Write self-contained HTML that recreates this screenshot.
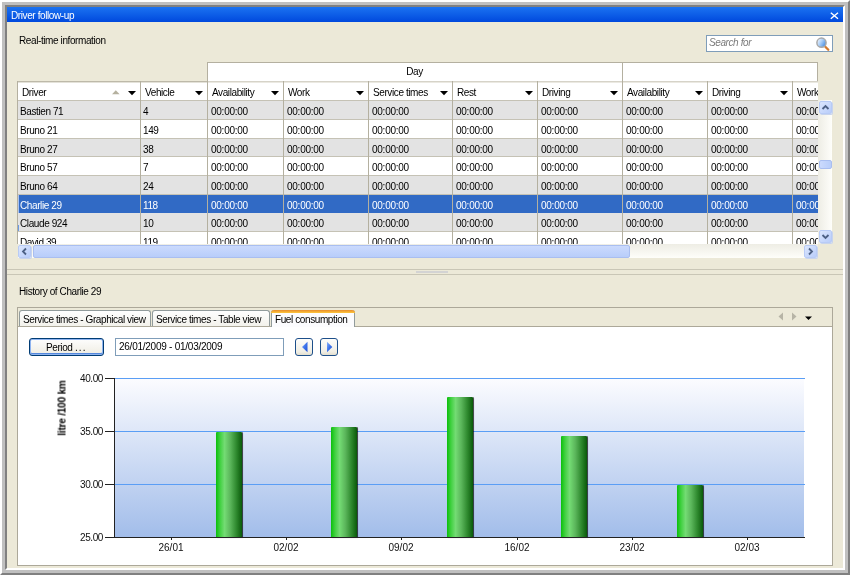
<!DOCTYPE html><html><head><meta charset="utf-8"><style>
*{box-sizing:border-box}
html,body{margin:0;padding:0}
body{width:850px;height:575px;overflow:hidden;position:relative;background:#fff;font-family:"Liberation Sans", sans-serif;font-size:10px;}
.a{position:absolute}
.t{position:absolute;white-space:nowrap;line-height:11px;font-size:10px;letter-spacing:-0.4px;will-change:transform}
</style></head><body>
<div class="a" style="left:0;top:0;width:850px;height:575px;background:#c0c0c0;border:2px solid;border-color:#fff #808080 #808080 #fff"></div>
<div class="a" style="left:5px;top:5px;width:840px;height:565px;background:#ece9d8;border:2px solid;border-color:#808080 #fff #fff #808080"></div>
<div class="a" style="left:7px;top:7px;width:836px;height:15px;background:linear-gradient(#1b72f1,#0c5ce6 55%,#0048dd)"></div>
<div class="t" style="left:11px;top:10px;color:#fff;">Driver follow-up</div>
<svg class="a" style="left:829px;top:11px" width="11" height="10"><path d="M1.8 1.8 L9 7.8 M9 1.8 L1.8 7.8" stroke="#fff" stroke-width="1.4"/></svg>
<div class="t" style="left:19px;top:35px;color:#000;">Real-time information</div>
<div class="a" style="left:706px;top:35px;width:127px;height:17px;background:#fff;border:1px solid #7f9db9"></div>
<div class="t" style="left:709px;top:37px;color:#7a7a7a;font-style:italic;">Search for</div>
<svg class="a" style="left:814px;top:35px" width="17" height="17">
<defs><linearGradient id="mg" x1="0" y1="0.2" x2="1" y2="0.8"><stop offset="0" stop-color="#f4f9ff"/><stop offset="0.45" stop-color="#a9cdf6"/><stop offset="1" stop-color="#3d86e0"/></linearGradient></defs>
<line x1="11.3" y1="11.8" x2="14.3" y2="14.8" stroke="#d5792c" stroke-width="2.3" stroke-linecap="round"/>
<circle cx="7.5" cy="7.7" r="4.6" fill="url(#mg)" stroke="#a8a8a8" stroke-width="1.5"/>
</svg>
<div class="a" style="left:17px;top:62px;width:801px;height:182px;overflow:hidden">
<div class="a" style="left:190px;top:0px;width:611px;height:20px;background:#fff;border-top:1px solid #b4b0a0;"></div>
<div class="a" style="left:190px;top:0px;width:1px;height:20px;background:#b4b0a0"></div>
<div class="a" style="left:605px;top:0px;width:1px;height:20px;background:#b4b0a0"></div>
<div class="a" style="left:800px;top:0px;width:1px;height:20px;background:#b4b0a0"></div>
<div class="t" style="left:190px;width:415px;text-align:center;top:4px">Day</div>
<div class="a" style="left:0px;top:19px;width:801px;height:19px;background:#fff"></div>
<div class="a" style="left:190px;top:19px;width:611px;height:1px;background:#d6d3c8"></div>
<div class="a" style="left:190px;top:20px;width:611px;height:1px;background:#ebe9e2"></div>
<div class="a" style="left:0px;top:19px;width:190px;height:1px;background:#bdb9a9"></div>
<div class="a" style="left:0px;top:20px;width:190px;height:1px;background:#e4e2d9"></div>
<div class="a" style="left:0px;top:38px;width:801px;height:1px;background:#c5c2b5"></div>
<div class="a" style="left:0px;top:39px;width:801px;height:18px;background:#e3e3e3"></div>
<div class="a" style="left:0px;top:57px;width:801px;height:1px;background:#c5c2b5"></div>
<div class="t" style="left:3px;top:43.5px;color:#000;">Bastien 71</div>
<div class="t" style="left:126px;top:43.5px;color:#000;">4</div>
<div class="t" style="left:194px;top:43.5px;color:#000;letter-spacing:-0.25px;">00:00:00</div>
<div class="t" style="left:270px;top:43.5px;color:#000;letter-spacing:-0.25px;">00:00:00</div>
<div class="t" style="left:355px;top:43.5px;color:#000;letter-spacing:-0.25px;">00:00:00</div>
<div class="t" style="left:439px;top:43.5px;color:#000;letter-spacing:-0.25px;">00:00:00</div>
<div class="t" style="left:524px;top:43.5px;color:#000;letter-spacing:-0.25px;">00:00:00</div>
<div class="t" style="left:609px;top:43.5px;color:#000;letter-spacing:-0.25px;">00:00:00</div>
<div class="t" style="left:694px;top:43.5px;color:#000;letter-spacing:-0.25px;">00:00:00</div>
<div class="t" style="left:779px;top:43.5px;color:#000;letter-spacing:-0.25px;">00:00:00</div>
<div class="a" style="left:0px;top:58px;width:801px;height:18px;background:#fff"></div>
<div class="a" style="left:0px;top:76px;width:801px;height:1px;background:#c5c2b5"></div>
<div class="t" style="left:3px;top:62.5px;color:#000;">Bruno 21</div>
<div class="t" style="left:126px;top:62.5px;color:#000;">149</div>
<div class="t" style="left:194px;top:62.5px;color:#000;letter-spacing:-0.25px;">00:00:00</div>
<div class="t" style="left:270px;top:62.5px;color:#000;letter-spacing:-0.25px;">00:00:00</div>
<div class="t" style="left:355px;top:62.5px;color:#000;letter-spacing:-0.25px;">00:00:00</div>
<div class="t" style="left:439px;top:62.5px;color:#000;letter-spacing:-0.25px;">00:00:00</div>
<div class="t" style="left:524px;top:62.5px;color:#000;letter-spacing:-0.25px;">00:00:00</div>
<div class="t" style="left:609px;top:62.5px;color:#000;letter-spacing:-0.25px;">00:00:00</div>
<div class="t" style="left:694px;top:62.5px;color:#000;letter-spacing:-0.25px;">00:00:00</div>
<div class="t" style="left:779px;top:62.5px;color:#000;letter-spacing:-0.25px;">00:00:00</div>
<div class="a" style="left:0px;top:77px;width:801px;height:17px;background:#e3e3e3"></div>
<div class="a" style="left:0px;top:94px;width:801px;height:1px;background:#c5c2b5"></div>
<div class="t" style="left:3px;top:81.5px;color:#000;">Bruno 27</div>
<div class="t" style="left:126px;top:81.5px;color:#000;">38</div>
<div class="t" style="left:194px;top:81.5px;color:#000;letter-spacing:-0.25px;">00:00:00</div>
<div class="t" style="left:270px;top:81.5px;color:#000;letter-spacing:-0.25px;">00:00:00</div>
<div class="t" style="left:355px;top:81.5px;color:#000;letter-spacing:-0.25px;">00:00:00</div>
<div class="t" style="left:439px;top:81.5px;color:#000;letter-spacing:-0.25px;">00:00:00</div>
<div class="t" style="left:524px;top:81.5px;color:#000;letter-spacing:-0.25px;">00:00:00</div>
<div class="t" style="left:609px;top:81.5px;color:#000;letter-spacing:-0.25px;">00:00:00</div>
<div class="t" style="left:694px;top:81.5px;color:#000;letter-spacing:-0.25px;">00:00:00</div>
<div class="t" style="left:779px;top:81.5px;color:#000;letter-spacing:-0.25px;">00:00:00</div>
<div class="a" style="left:0px;top:95px;width:801px;height:18px;background:#fff"></div>
<div class="a" style="left:0px;top:113px;width:801px;height:1px;background:#c5c2b5"></div>
<div class="t" style="left:3px;top:99.5px;color:#000;">Bruno 57</div>
<div class="t" style="left:126px;top:99.5px;color:#000;">7</div>
<div class="t" style="left:194px;top:99.5px;color:#000;letter-spacing:-0.25px;">00:00:00</div>
<div class="t" style="left:270px;top:99.5px;color:#000;letter-spacing:-0.25px;">00:00:00</div>
<div class="t" style="left:355px;top:99.5px;color:#000;letter-spacing:-0.25px;">00:00:00</div>
<div class="t" style="left:439px;top:99.5px;color:#000;letter-spacing:-0.25px;">00:00:00</div>
<div class="t" style="left:524px;top:99.5px;color:#000;letter-spacing:-0.25px;">00:00:00</div>
<div class="t" style="left:609px;top:99.5px;color:#000;letter-spacing:-0.25px;">00:00:00</div>
<div class="t" style="left:694px;top:99.5px;color:#000;letter-spacing:-0.25px;">00:00:00</div>
<div class="t" style="left:779px;top:99.5px;color:#000;letter-spacing:-0.25px;">00:00:00</div>
<div class="a" style="left:0px;top:114px;width:801px;height:18px;background:#e3e3e3"></div>
<div class="a" style="left:0px;top:132px;width:801px;height:1px;background:#c5c2b5"></div>
<div class="t" style="left:3px;top:118.5px;color:#000;">Bruno 64</div>
<div class="t" style="left:126px;top:118.5px;color:#000;">24</div>
<div class="t" style="left:194px;top:118.5px;color:#000;letter-spacing:-0.25px;">00:00:00</div>
<div class="t" style="left:270px;top:118.5px;color:#000;letter-spacing:-0.25px;">00:00:00</div>
<div class="t" style="left:355px;top:118.5px;color:#000;letter-spacing:-0.25px;">00:00:00</div>
<div class="t" style="left:439px;top:118.5px;color:#000;letter-spacing:-0.25px;">00:00:00</div>
<div class="t" style="left:524px;top:118.5px;color:#000;letter-spacing:-0.25px;">00:00:00</div>
<div class="t" style="left:609px;top:118.5px;color:#000;letter-spacing:-0.25px;">00:00:00</div>
<div class="t" style="left:694px;top:118.5px;color:#000;letter-spacing:-0.25px;">00:00:00</div>
<div class="t" style="left:779px;top:118.5px;color:#000;letter-spacing:-0.25px;">00:00:00</div>
<div class="a" style="left:0px;top:133px;width:801px;height:18px;background:#316ac5"></div>
<div class="a" style="left:1px;top:133px;width:1px;height:18px;background:#a9c1ee"></div>
<div class="t" style="left:3px;top:137.5px;color:#fff;">Charlie 29</div>
<div class="t" style="left:126px;top:137.5px;color:#fff;">118</div>
<div class="t" style="left:194px;top:137.5px;color:#fff;letter-spacing:-0.25px;">00:00:00</div>
<div class="t" style="left:270px;top:137.5px;color:#fff;letter-spacing:-0.25px;">00:00:00</div>
<div class="t" style="left:355px;top:137.5px;color:#fff;letter-spacing:-0.25px;">00:00:00</div>
<div class="t" style="left:439px;top:137.5px;color:#fff;letter-spacing:-0.25px;">00:00:00</div>
<div class="t" style="left:524px;top:137.5px;color:#fff;letter-spacing:-0.25px;">00:00:00</div>
<div class="t" style="left:609px;top:137.5px;color:#fff;letter-spacing:-0.25px;">00:00:00</div>
<div class="t" style="left:694px;top:137.5px;color:#fff;letter-spacing:-0.25px;">00:00:00</div>
<div class="t" style="left:779px;top:137.5px;color:#fff;letter-spacing:-0.25px;">00:00:00</div>
<div class="a" style="left:0px;top:151px;width:801px;height:18px;background:#e3e3e3"></div>
<div class="a" style="left:0px;top:169px;width:801px;height:1px;background:#c5c2b5"></div>
<div class="t" style="left:3px;top:155.5px;color:#000;">Claude 924</div>
<div class="t" style="left:126px;top:155.5px;color:#000;">10</div>
<div class="t" style="left:194px;top:155.5px;color:#000;letter-spacing:-0.25px;">00:00:00</div>
<div class="t" style="left:270px;top:155.5px;color:#000;letter-spacing:-0.25px;">00:00:00</div>
<div class="t" style="left:355px;top:155.5px;color:#000;letter-spacing:-0.25px;">00:00:00</div>
<div class="t" style="left:439px;top:155.5px;color:#000;letter-spacing:-0.25px;">00:00:00</div>
<div class="t" style="left:524px;top:155.5px;color:#000;letter-spacing:-0.25px;">00:00:00</div>
<div class="t" style="left:609px;top:155.5px;color:#000;letter-spacing:-0.25px;">00:00:00</div>
<div class="t" style="left:694px;top:155.5px;color:#000;letter-spacing:-0.25px;">00:00:00</div>
<div class="t" style="left:779px;top:155.5px;color:#000;letter-spacing:-0.25px;">00:00:00</div>
<div class="a" style="left:0px;top:170px;width:801px;height:18px;background:#fff"></div>
<div class="a" style="left:0px;top:188px;width:801px;height:1px;background:#c5c2b5"></div>
<div class="t" style="left:3px;top:174.5px;color:#000;">David 39</div>
<div class="t" style="left:126px;top:174.5px;color:#000;">119</div>
<div class="t" style="left:194px;top:174.5px;color:#000;letter-spacing:-0.25px;">00:00:00</div>
<div class="t" style="left:270px;top:174.5px;color:#000;letter-spacing:-0.25px;">00:00:00</div>
<div class="t" style="left:355px;top:174.5px;color:#000;letter-spacing:-0.25px;">00:00:00</div>
<div class="t" style="left:439px;top:174.5px;color:#000;letter-spacing:-0.25px;">00:00:00</div>
<div class="t" style="left:524px;top:174.5px;color:#000;letter-spacing:-0.25px;">00:00:00</div>
<div class="t" style="left:609px;top:174.5px;color:#000;letter-spacing:-0.25px;">00:00:00</div>
<div class="t" style="left:694px;top:174.5px;color:#000;letter-spacing:-0.25px;">00:00:00</div>
<div class="t" style="left:779px;top:174.5px;color:#000;letter-spacing:-0.25px;">00:00:00</div>
<div class="a" style="left:0px;top:19px;width:1px;height:200px;background:#b4b0a0"></div>
<div class="a" style="left:123px;top:19px;width:1px;height:200px;background:#b4b0a0"></div>
<div class="a" style="left:190px;top:19px;width:1px;height:200px;background:#b4b0a0"></div>
<div class="a" style="left:266px;top:19px;width:1px;height:200px;background:#b4b0a0"></div>
<div class="a" style="left:351px;top:19px;width:1px;height:200px;background:#b4b0a0"></div>
<div class="a" style="left:435px;top:19px;width:1px;height:200px;background:#b4b0a0"></div>
<div class="a" style="left:520px;top:19px;width:1px;height:200px;background:#b4b0a0"></div>
<div class="a" style="left:605px;top:19px;width:1px;height:200px;background:#b4b0a0"></div>
<div class="a" style="left:690px;top:19px;width:1px;height:200px;background:#b4b0a0"></div>
<div class="a" style="left:775px;top:19px;width:1px;height:200px;background:#b4b0a0"></div>
<div class="t" style="left:5px;top:25px;color:#000;">Driver</div>
<svg class="a" style="left:111px;top:29px" width="9" height="5"><path d="M0 0 H8 L4 4.2 Z" fill="#000"/></svg>
<div class="t" style="left:128px;top:25px;color:#000;">Vehicle</div>
<svg class="a" style="left:178px;top:29px" width="9" height="5"><path d="M0 0 H8 L4 4.2 Z" fill="#000"/></svg>
<div class="t" style="left:195px;top:25px;color:#000;">Availability</div>
<svg class="a" style="left:254px;top:29px" width="9" height="5"><path d="M0 0 H8 L4 4.2 Z" fill="#000"/></svg>
<div class="t" style="left:271px;top:25px;color:#000;">Work</div>
<svg class="a" style="left:339px;top:29px" width="9" height="5"><path d="M0 0 H8 L4 4.2 Z" fill="#000"/></svg>
<div class="t" style="left:356px;top:25px;color:#000;">Service times</div>
<svg class="a" style="left:423px;top:29px" width="9" height="5"><path d="M0 0 H8 L4 4.2 Z" fill="#000"/></svg>
<div class="t" style="left:440px;top:25px;color:#000;">Rest</div>
<svg class="a" style="left:508px;top:29px" width="9" height="5"><path d="M0 0 H8 L4 4.2 Z" fill="#000"/></svg>
<div class="t" style="left:525px;top:25px;color:#000;">Driving</div>
<svg class="a" style="left:593px;top:29px" width="9" height="5"><path d="M0 0 H8 L4 4.2 Z" fill="#000"/></svg>
<div class="t" style="left:610px;top:25px;color:#000;">Availability</div>
<svg class="a" style="left:678px;top:29px" width="9" height="5"><path d="M0 0 H8 L4 4.2 Z" fill="#000"/></svg>
<div class="t" style="left:695px;top:25px;color:#000;">Driving</div>
<svg class="a" style="left:763px;top:29px" width="9" height="5"><path d="M0 0 H8 L4 4.2 Z" fill="#000"/></svg>
<div class="t" style="left:780px;top:25px;color:#000;">Work</div>
<svg class="a" style="left:848px;top:29px" width="9" height="5"><path d="M0 0 H8 L4 4.2 Z" fill="#000"/></svg>
<svg class="a" style="left:95px;top:28px" width="9" height="5"><path d="M0 4.2 H7.6 L3.8 0.2 Z" fill="#b5b19f"/></svg>
</div>
<div class="a" style="left:17px;top:81px;width:1px;height:163px;background:#b4b0a0"></div>
<div class="a" style="left:18px;top:225px;width:1px;height:6px;background:#6d9be3"></div>
<div class="a" style="left:18px;top:244px;width:800px;height:14px;background:linear-gradient(#eeede5,#fefefa)"></div>
<div class="a" style="left:18px;top:245px;width:13px;height:13px;border-radius:2px;background:linear-gradient(135deg,#dbe6fd,#b9cdfa);border:1px solid #b8cbf6;box-shadow:1px 1px 0 #c8d4ec"></div>
<div class="a" style="left:33px;top:245px;width:597px;height:13px;border-radius:2px;background:linear-gradient(#cbdafd,#b8cdfa);border:1px solid #a9bef0"></div>
<div class="a" style="left:804px;top:245px;width:13px;height:13px;border-radius:2px;background:linear-gradient(135deg,#dbe6fd,#b9cdfa);border:1px solid #b8cbf6;box-shadow:1px 1px 0 #c8d4ec"></div>
<svg class="a" style="left:18px;top:245px" width="13" height="13"><path d="M8 3.5 L5 6.5 L8 9.5" stroke="#4d6185" stroke-width="1.8" fill="none"/></svg>
<svg class="a" style="left:804px;top:245px" width="13" height="13"><path d="M5 3.5 L8 6.5 L5 9.5" stroke="#4d6185" stroke-width="1.8" fill="none"/></svg>
<div class="a" style="left:818px;top:100px;width:14px;height:144px;background:linear-gradient(90deg,#eeede5,#fefefa)"></div>
<div class="a" style="left:819px;top:101px;width:13px;height:13px;border-radius:2px;background:linear-gradient(135deg,#dbe6fd,#b9cdfa);border:1px solid #b8cbf6;box-shadow:1px 1px 0 #c8d4ec"></div>
<div class="a" style="left:819px;top:160px;width:13px;height:9px;border-radius:2px;background:linear-gradient(90deg,#cbdafd,#b8cdfa);border:1px solid #a9bef0"></div>
<div class="a" style="left:819px;top:230px;width:13px;height:13px;border-radius:2px;background:linear-gradient(135deg,#dbe6fd,#b9cdfa);border:1px solid #b8cbf6;box-shadow:1px 1px 0 #c8d4ec"></div>
<svg class="a" style="left:819px;top:101px" width="13" height="13"><path d="M3.5 8 L6.5 5 L9.5 8" stroke="#4d6185" stroke-width="1.8" fill="none"/></svg>
<svg class="a" style="left:819px;top:230px" width="13" height="13"><path d="M3.5 5 L6.5 8 L9.5 5" stroke="#4d6185" stroke-width="1.8" fill="none"/></svg>
<div class="a" style="left:7px;top:269px;width:836px;height:1px;background:#c9c6b6"></div>
<div class="a" style="left:7px;top:274px;width:836px;height:1px;background:#c9c6b6"></div>
<div class="a" style="left:416px;top:271px;width:32px;height:2px;background:#d3d3d3"></div>
<div class="t" style="left:19px;top:286px;color:#000;">History of Charlie 29</div>
<div class="a" style="left:17px;top:307px;width:816px;height:259px;border:1px solid #aca899;background:#ece9d8"></div>
<div class="a" style="left:18px;top:326px;width:814px;height:239px;background:#fff;border-top:1px solid #aca899"></div>
<div class="a" style="left:19px;top:310px;width:132px;height:16px;background:linear-gradient(#fefefe,#f3f2ec);border:1px solid #919b9c;border-bottom:none;border-radius:3px 3px 0 0"></div>
<div class="t" style="left:23px;top:314px;color:#000;">Service times - Graphical view</div>
<div class="a" style="left:152px;top:310px;width:118px;height:16px;background:linear-gradient(#fefefe,#f3f2ec);border:1px solid #919b9c;border-bottom:none;border-radius:3px 3px 0 0"></div>
<div class="t" style="left:156px;top:314px;color:#000;">Service times - Table view</div>
<div class="a" style="left:271px;top:310px;width:84px;height:17px;background:#fcfcfe;border:1px solid #919b9c;border-bottom:none;border-top:none;border-radius:3px 3px 0 0"></div>
<div class="a" style="left:271px;top:310px;width:84px;height:3px;background:linear-gradient(#e68b2c,#ffc83c);border-radius:3px 3px 0 0"></div>
<div class="t" style="left:275px;top:314px;color:#000;">Fuel consumption</div>
<svg class="a" style="left:776px;top:311px" width="40" height="12"><path d="M7 1.5 L2.5 5.5 L7 9.5 Z" fill="#b7b4a6"/><path d="M16 1.5 L20.5 5.5 L16 9.5 Z" fill="#b7b4a6"/><path d="M29 5.5 H36 L32.5 9 Z" fill="#000"/></svg>
<div class="a" style="left:29px;top:338px;width:75px;height:18px;border:1px solid #003c74;border-radius:3px;background:linear-gradient(#fdfdfd,#f1efe6 85%,#e3e0d2);box-shadow:inset 0 0 0 1px #8fb4f0, inset 0 -1px 0 1px #5588dc"></div>
<div class="t" style="left:46px;top:342px;color:#000;">Period <span style="letter-spacing:1.1px">...</span></div>
<div class="a" style="left:115px;top:338px;width:169px;height:18px;border:1px solid #7f9db9;background:#fff"></div>
<div class="t" style="left:119px;top:341px;color:#000;letter-spacing:-0.25px;">26/01/2009 - 01/03/2009</div>
<div class="a" style="left:295px;top:338px;width:18px;height:18px;border:1px solid #1d4f8a;border-radius:3px;background:linear-gradient(#fdfdfb,#f0eee4 80%,#e3dfcf)"></div>
<svg class="a" style="left:295px;top:338px" width="18" height="18"><defs><linearGradient id="tgl" x1="0" y1="0" x2="1" y2="1"><stop offset="0" stop-color="#8fb6fb"/><stop offset="0.5" stop-color="#3d73ea"/><stop offset="1" stop-color="#1d4fd6"/></linearGradient></defs><path d="M12.5 3.8 L7 9 L12.5 14.2 Z" fill="url(#tgl)"/></svg>
<div class="a" style="left:320px;top:338px;width:18px;height:18px;border:1px solid #1d4f8a;border-radius:3px;background:linear-gradient(#fdfdfb,#f0eee4 80%,#e3dfcf)"></div>
<svg class="a" style="left:320px;top:338px" width="18" height="18"><path d="M7 3.8 L12.3 9 L7 14.2 Z" fill="url(#tgl)"/></svg>
<div class="a" style="left:114px;top:378px;width:690px;height:159px;background:linear-gradient(#fcfcff,#a2bdea)"></div>
<div class="a" style="left:114px;top:378px;width:691px;height:1px;background:#5a9ef5"></div>
<div class="a" style="left:114px;top:431px;width:691px;height:1px;background:#5a9ef5"></div>
<div class="a" style="left:114px;top:484px;width:691px;height:1px;background:#5a9ef5"></div>
<div class="a" style="left:216px;top:432px;width:26px;height:105px;background:linear-gradient(90deg,#0bbf0b 0%,#3fd03f 15%,#74dc74 33%,#5bb65b 55%,#2f8a2f 78%,#0a5a0a 100%);box-shadow:1px 0 0 rgba(0,0,0,0.55),1px 1px 1px rgba(0,0,0,0.35);border-radius:1px 1px 0 0"></div>
<div class="a" style="left:331px;top:427px;width:26px;height:110px;background:linear-gradient(90deg,#0bbf0b 0%,#3fd03f 15%,#74dc74 33%,#5bb65b 55%,#2f8a2f 78%,#0a5a0a 100%);box-shadow:1px 0 0 rgba(0,0,0,0.55),1px 1px 1px rgba(0,0,0,0.35);border-radius:1px 1px 0 0"></div>
<div class="a" style="left:447px;top:397px;width:26px;height:140px;background:linear-gradient(90deg,#0bbf0b 0%,#3fd03f 15%,#74dc74 33%,#5bb65b 55%,#2f8a2f 78%,#0a5a0a 100%);box-shadow:1px 0 0 rgba(0,0,0,0.55),1px 1px 1px rgba(0,0,0,0.35);border-radius:1px 1px 0 0"></div>
<div class="a" style="left:561px;top:436px;width:26px;height:101px;background:linear-gradient(90deg,#0bbf0b 0%,#3fd03f 15%,#74dc74 33%,#5bb65b 55%,#2f8a2f 78%,#0a5a0a 100%);box-shadow:1px 0 0 rgba(0,0,0,0.55),1px 1px 1px rgba(0,0,0,0.35);border-radius:1px 1px 0 0"></div>
<div class="a" style="left:677px;top:485px;width:26px;height:52px;background:linear-gradient(90deg,#0bbf0b 0%,#3fd03f 15%,#74dc74 33%,#5bb65b 55%,#2f8a2f 78%,#0a5a0a 100%);box-shadow:1px 0 0 rgba(0,0,0,0.55),1px 1px 1px rgba(0,0,0,0.35);border-radius:1px 1px 0 0"></div>
<div class="a" style="left:114px;top:378px;width:1px;height:160px;background:#222"></div>
<div class="a" style="left:114px;top:537px;width:691px;height:1px;background:#222"></div>
<div class="a" style="left:105px;top:378px;width:9px;height:1px;background:#222"></div>
<div class="t" style="left:60px;width:43px;text-align:right;top:373px;color:#111">40.00</div>
<div class="a" style="left:105px;top:431px;width:9px;height:1px;background:#222"></div>
<div class="t" style="left:60px;width:43px;text-align:right;top:426px;color:#111">35.00</div>
<div class="a" style="left:105px;top:484px;width:9px;height:1px;background:#222"></div>
<div class="t" style="left:60px;width:43px;text-align:right;top:479px;color:#111">30.00</div>
<div class="a" style="left:105px;top:537px;width:9px;height:1px;background:#222"></div>
<div class="t" style="left:60px;width:43px;text-align:right;top:532px;color:#111">25.00</div>
<div class="a" style="left:171px;top:537px;width:1px;height:3px;background:#222"></div>
<div class="t" style="left:141px;width:60px;text-align:center;top:542px;color:#111;letter-spacing:0">26/01</div>
<div class="a" style="left:286px;top:537px;width:1px;height:3px;background:#222"></div>
<div class="t" style="left:256px;width:60px;text-align:center;top:542px;color:#111;letter-spacing:0">02/02</div>
<div class="a" style="left:401px;top:537px;width:1px;height:3px;background:#222"></div>
<div class="t" style="left:371px;width:60px;text-align:center;top:542px;color:#111;letter-spacing:0">09/02</div>
<div class="a" style="left:517px;top:537px;width:1px;height:3px;background:#222"></div>
<div class="t" style="left:487px;width:60px;text-align:center;top:542px;color:#111;letter-spacing:0">16/02</div>
<div class="a" style="left:632px;top:537px;width:1px;height:3px;background:#222"></div>
<div class="t" style="left:602px;width:60px;text-align:center;top:542px;color:#111;letter-spacing:0">23/02</div>
<div class="a" style="left:747px;top:537px;width:1px;height:3px;background:#222"></div>
<div class="t" style="left:717px;width:60px;text-align:center;top:542px;color:#111;letter-spacing:0">02/03</div>
<div class="t" style="left:62px;top:408px;font-weight:bold;transform:translate(-50%,-50%) rotate(-90deg);letter-spacing:-0.2px">litre /100 km</div>
</body></html>
